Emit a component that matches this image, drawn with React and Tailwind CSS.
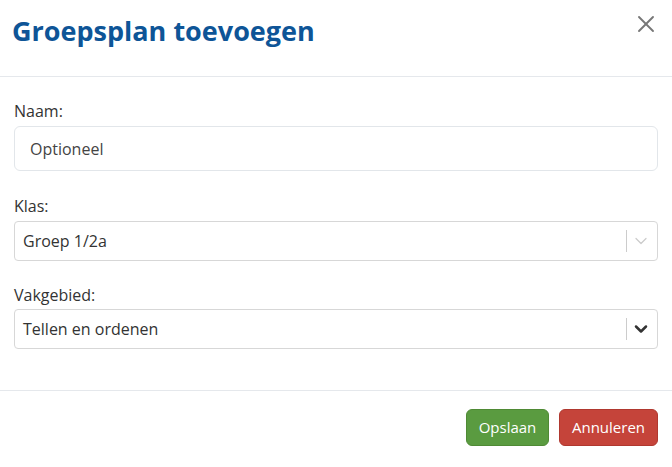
import { X, ChevronDown } from "lucide-react";

const font = { fontFamily: '"Open Sans", "Noto Sans", sans-serif' };

function SelectBox({ value, disabled }) {
  return (
    <div className="flex h-[40px] items-center rounded-[4px] border border-[#d7d7d7] bg-white pl-[8px] pr-[6px]">
      <span className="flex-1 text-[16px] text-[#333]">{value}</span>
      <span className="h-[22px] w-px bg-[#ccc]" />
      <ChevronDown
        size={20}
        strokeWidth={disabled ? 1.5 : 3}
        className={disabled ? "ml-[4px] text-[#ccc]" : "ml-[4px] text-[#333]"}
      />
    </div>
  );
}

export default function App() {
  return (
    <div className="h-[467px] w-[672px] bg-white" style={font}>
      {/* header */}
      <div className="flex h-[77px] items-start justify-between border-b border-[#e5e8ec] pl-[12px] pr-[12px] pt-[12px]">
        <h1 className="text-[27px] leading-[38px] font-bold text-[#0e5597]">Groepsplan toevoegen</h1>
        <X size={28} strokeWidth={1.6} className="mt-[-2px] text-[#777]" />
      </div>

      {/* body */}
      <div className="flex flex-col px-[14px] pt-[22px] pb-[41px]">
        <label className="text-[16px] text-[#333]">Naam:</label>
        <div className="mt-[3px] flex h-[45px] items-center rounded-[6px] border border-[#e2e6ea] px-[15px] text-[16px] text-[#444]">
          Optioneel
        </div>

        <label className="mt-[23px] text-[16px] text-[#333]">Klas:</label>
        <div className="mt-[3px]">
          <SelectBox value="Groep 1/2a" disabled />
        </div>

        <label className="mt-[22px] text-[16px] text-[#333]">Vakgebied:</label>
        <div className="mt-[2px]">
          <SelectBox value="Tellen en ordenen" />
        </div>
      </div>

      {/* footer */}
      <div className="flex justify-end gap-[10px] border-t border-[#e5e8ec] px-[14px] pt-[18px]">
        <button className="h-[37px] w-[83px] rounded-[6px] border border-[#4f8a35] bg-[#5a9b40] text-[15px] text-white">
          Opslaan
        </button>
        <button className="h-[37px] w-[99px] rounded-[6px] border border-[#b0382f] bg-[#c5443a] text-[15px] text-white">
          Annuleren
        </button>
      </div>
    </div>
  );
}
